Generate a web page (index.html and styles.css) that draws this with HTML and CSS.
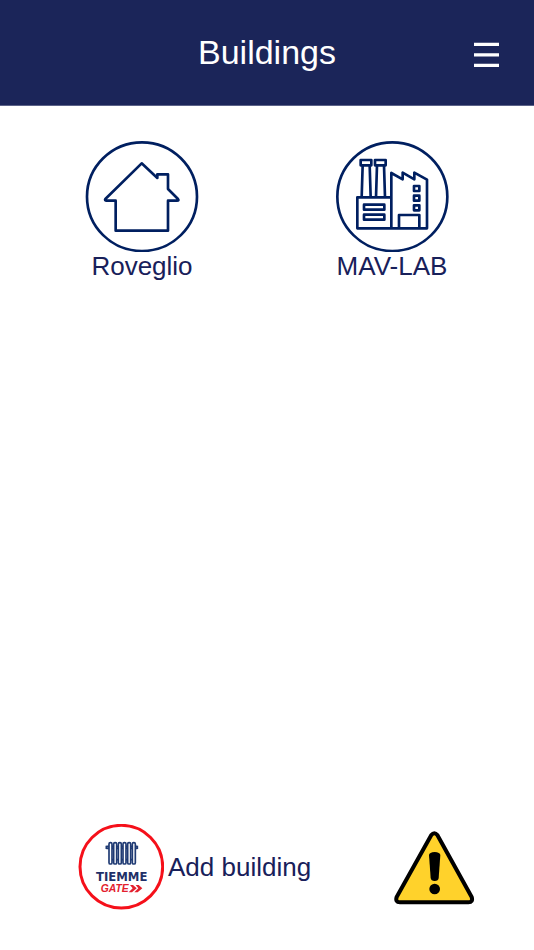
FILE: index.html
```html
<!DOCTYPE html>
<html lang="en">
<head>
    <meta charset="UTF-8">
    <meta name="viewport" content="width=device-width, initial-scale=1.0"/>
    <title>Buildings</title>
    <link rel="stylesheet" href="styles.css">
</head>
<body>
<header class="header">
    <h1>Buildings</h1>
    <button class="menu" type="button" aria-label="Menu">
        <svg width="26" height="30" viewBox="0 0 26 30">
            <path d="M0 7.4h25M0 17.9h25M0 28.4h25"/>
        </svg>
    </button>
</header>
<main class="main">
    <ul class="list">
        <li>
            <a class="building" href="#roveglio">
                <svg class="round" viewBox="15 18 342 333">
                    <ellipse cx="186" cy="185" rx="165" ry="163"/>
                    <path d="M185 85L76 192Q73 197 80 197H107V287H264V197H291Q298 197 294 192L264 162V118H232V129Z"/>
                </svg>
                <span>Roveglio</span>
            </a>
        </li>
        <li>
            <a class="building" href="#mav-lab">
                <svg class="round" viewBox="15 18 342 333">
                    <ellipse cx="187" cy="185" rx="165" ry="163"/>
                    <path d="M82 187H184V280H82ZM184 280H291V134L253 113V133L218 113V133L184 114V187"/>
                    <path d="M92 75H124V91H92ZM135 75H167V91H135ZM98 91L95 187M119 91L122 187M141 91L138 187M162 91L165 187"/>
                    <path d="M102 209H163V224H102ZM102 239H163V254H102ZM207 280V240H268V280"/>
                    <path d="M252 153H268V168H252ZM252 182H268V197H252ZM252 211H268V226H252Z"/>
                </svg>
                <span>MAV-LAB</span>
            </a>
        </li>
    </ul>
</main>
<footer class="footer">
    <a class="add" href="#add">
        <svg class="gate" viewBox="12 12 258 258">
            <circle class="ring" cx="142" cy="140" r="124"/>
            <g class="radiator">
                <rect x="105" y="68" width="9" height="64" rx="4"/>
                <rect x="119" y="68" width="9" height="64" rx="4"/>
                <rect x="133" y="68" width="9" height="64" rx="4"/>
                <rect x="147" y="68" width="9" height="64" rx="4"/>
                <rect x="161" y="68" width="9" height="64" rx="4"/>
                <rect x="175" y="68" width="9" height="64" rx="4"/>
                <path d="M97 77V87M190 77V87M97 79H105M97 85H105M114 79H119M114 85H119M128 79H133M128 85H133M142 79H147M142 85H147M156 79H161M156 85H161M170 79H175M170 85H175M184 79H190M184 85H190M114 119H119M128 119H133M142 119H147M156 119H161M170 119H175"/>
            </g>
            <text class="brand" x="143" y="184" text-anchor="middle">TIEMME</text>
            <text class="sub" x="80" y="217">GATE</text>
            <path class="arrows" d="M168 195H177L188 205L174 217H164L176 205ZM185 195H194L205 205L191 217H181L193 205Z"/>
        </svg>
        <span>Add building</span>
    </a>
    <button class="alarm" type="button" aria-label="Warnings">
        <svg width="81" height="75" viewBox="27 30 243 225">
            <path class="sign" d="M139 45Q148 34 157 45L260 231Q265 246 250 247H45Q30 246 35 231Z"/>
            <path d="M132 105Q133 97 149 96Q165 97 166 105L161 174Q160 183 149 183Q138 183 137 174Z"/>
            <circle cx="149" cy="207" r="16"/>
        </svg>
    </button>
</footer>
</body>
</html>
```
FILE: styles.css
```css
*{ box-sizing: border-box;}
body{ margin: 0; min-height: 100vh; display: flex; flex-direction: column; background: #fff; color: #18205a; font-family: "Liberation Sans", Arial, sans-serif; font-size: 26px; line-height: 28px;}
ul{ margin: 0; padding: 0; list-style: none;}
a{ color: inherit; text-decoration: none;}
button{ padding: 0; border: 0; background: none; cursor: pointer;}
svg{ display: block;}

.header{ display: grid; grid-template-columns: 1fr auto 1fr; align-items: center; height: 106px; padding: 0 34px 2px; background: #1b2559; border-bottom: 1px solid #5b6288; color: #fff;}
.header h1{ grid-column: 2; margin: 0; font-size: 34px; line-height: 40px; font-weight: normal;}
.menu{ justify-self: end;}
.menu path{ stroke: #fff; stroke-width: 3.2;}

.main{ flex: 1; padding: 35px 17px;}
.list{ display: grid; grid-template-columns: 1fr 1fr;}
.building{ display: flex; flex-direction: column; align-items: center;}
.round{ width: 114px; height: 111px; fill: none; stroke: #001f60; stroke-width: 8; stroke-linejoin: round;}

.footer{ display: flex; justify-content: space-between; align-items: center; padding: 0 59px 40px 78px;}
.add{ display: flex; align-items: center; gap: 4px;}
.gate{ width: 86px; height: 86px;}
.ring{ fill: none; stroke: #f5101a; stroke-width: 9;}
.radiator{ fill: none; stroke: #1f3a73; stroke-width: 5;}
.brand{ fill: #1f3068; font: bold 35px "DejaVu Sans", sans-serif;}
.sub{ fill: #e3202e; font: italic bold 31px "Liberation Sans Narrow", "Liberation Sans", sans-serif;}
.arrows{ fill: #e3202e;}
.sign{ fill: #ffd22b; stroke: #000; stroke-width: 12; stroke-linejoin: round;}
```
